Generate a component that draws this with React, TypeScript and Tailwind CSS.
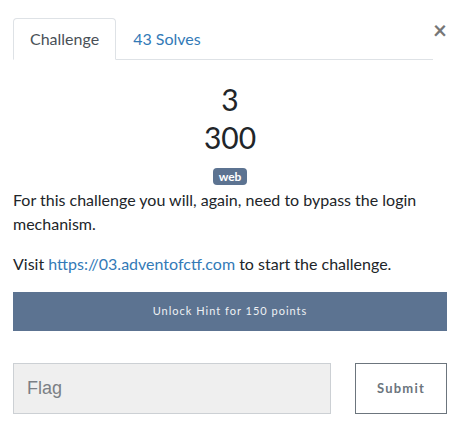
import * as React from 'react';

export default function App() {
    const [flag, setFlag] = React.useState("");

    return (
        <div className="min-h-[445px] w-full bg-white pl-[13px] pr-[24px] pt-[18px] font-['Lato',sans-serif] text-[#212529]">
            {/* --- Tabs + close --- */}
            <div className="flex items-start">
                <ul className="flex w-[420px] border-b border-[#dee2e6]">
                    <li className="-mb-px rounded-t-[4px] border border-[#dee2e6] border-b-white bg-white px-4 py-2 text-base leading-6 text-[#495057]">
                        Challenge
                    </li>
                    <li className="-mb-px border border-transparent px-4 py-2 text-base leading-6 text-[#337ab7]">
                        43 Solves
                    </li>
                </ul>
                <button className="ml-auto mt-0 text-[24px] font-bold leading-none text-[#777]">×</button>
            </div>

            {/* --- Title + value --- */}
            <div className="mt-[20px] flex flex-col items-center">
                <h3 className="text-[30px] leading-[38px]">3</h3>
                <h4 className="text-[30px] leading-[38px]">300</h4>
                <span className="mt-[12px] rounded-[4px] bg-[#5c7391] px-[6px] text-[12px] font-bold leading-[17px] text-white">web</span>
            </div>

            {/* --- Description --- */}
            <div className="mt-[3px] text-base leading-6">
                <p className="mb-4">For this challenge you will, again, need to bypass the login mechanism.</p>
                <p className="mb-4">
                    Visit <a href="#" className="text-[#337ab7]">https://03.adventofctf.com</a> to start the challenge.
                </p>
            </div>

            {/* --- Hint --- */}
            <button className="flex h-[39px] w-full items-center justify-center bg-[#5c7391] text-[11px] tracking-[1px] text-[#eef1f4]">
                Unlock Hint for 150 points
            </button>

            {/* --- Flag form --- */}
            <div className="mt-[32px] flex gap-[24px]">
                <input
                    value={flag}
                    onChange={(e) => setFlag(e.target.value)}
                    placeholder="Flag"
                    className="h-[51px] w-[318px] border border-[#ccd0d4] bg-[#efefef] px-[13px] font-['Liberation_Sans',sans-serif] text-[18px] text-[#495057] outline-none placeholder:text-[#7b7f85]"
                />
                <button className="h-[51px] w-[92px] border border-[#6c757d] bg-white text-[13px] font-bold tracking-[1.2px] text-[#6c757d]">
                    Submit
                </button>
            </div>
        </div>
    );
}
